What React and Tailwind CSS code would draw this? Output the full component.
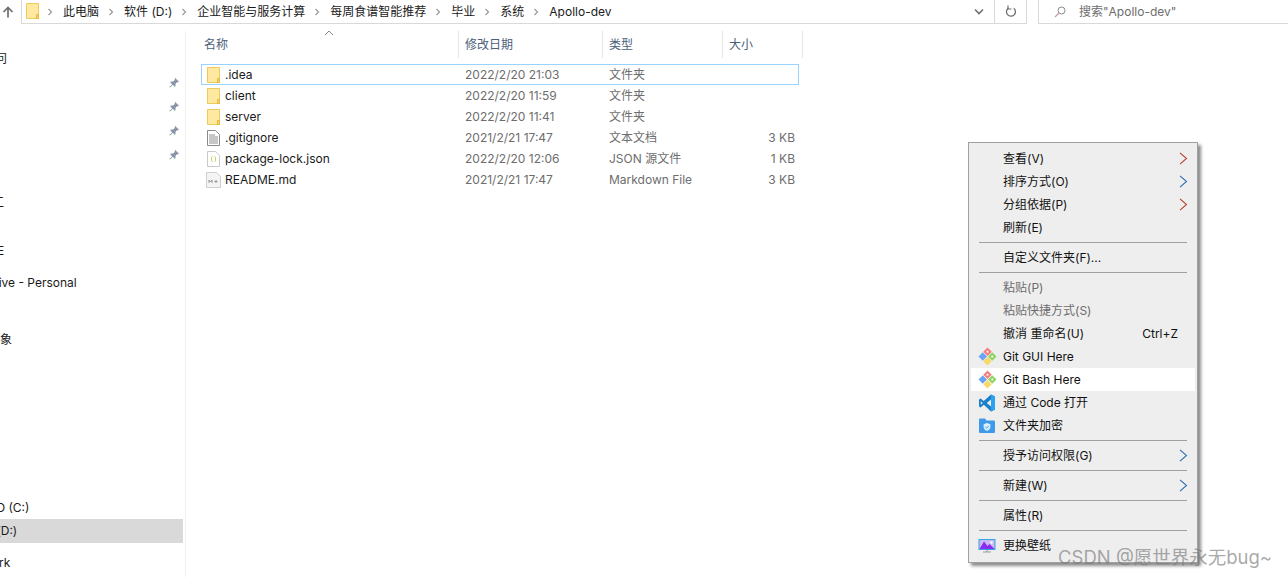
import React from "react";

const FONT = "font-['Inter','Noto_Sans_CJK_SC',sans-serif]";

function Folder() {
  return (
    <svg width="16" height="16" viewBox="0 0 16 16" className="shrink-0">
      <path d="M1.5 .5h12v15h-12z" fill="#ffe8a0" stroke="#eec95c" />
      <path d="M11.5 15.5v-4h2v4z" fill="#ffd75e" stroke="#e6b93f" strokeWidth="1" />
    </svg>
  );
}
function TextFile() {
  return (
    <svg width="16" height="16" viewBox="0 0 16 16" className="shrink-0">
      <path d="M1.5 .5h8l4 4v11h-12z" fill="#fff" stroke="#8a8a8a" />
      <path d="M3 5h6M3 7h9M3 9h9M3 11h9M3 13h9" stroke="#8e8e8e" />
    </svg>
  );
}
function JsonFile() {
  return (
    <svg width="16" height="16" viewBox="0 0 16 16" className="shrink-0">
      <path d="M1.5 .5h8l4 4v11h-12z" fill="#fff" stroke="#c9c9c9" />
      <path d="M6.5 5.5c-1 0-1 .5-1 2.5s0 2.5 1 2.5M8.5 5.5c1 0 1 .5 1 2.5s0 2.5-1 2.5" fill="none" stroke="#c7cc63" />
    </svg>
  );
}
function MdFile() {
  return (
    <svg width="16" height="16" viewBox="0 0 16 16" className="shrink-0">
      <path d="M.5 .5h10l4 4v11H.5z" fill="#f4f4f4" stroke="#cfcfcf" />
      <path d="M3 11V8l1.500 2L6 8v3M10 8v3M8.500 9.500h3" fill="none" stroke="#9a9a9a" />
    </svg>
  );
}
function GitIcon() {
  return (
    <svg width="19" height="19" viewBox="0 0 18 18">
      <path d="M9 .5l4 4L9 8.500l-4-4z" fill="#f77d7d" />
      <path d="M4.500 5L8.500 9l-4 4L.5 9z" fill="#6aa5f5" />
      <path d="M13.500 5l4 4-4 4-4-4z" fill="#8fd35f" />
      <path d="M9 9.500l4 4-4 4-4-4z" fill="#f7d96a" />
      <circle cx="9" cy="4.500" r="1" fill="#fff" />
      <circle cx="13.500" cy="9" r="1" fill="#fff" />
    </svg>
  );
}
function CodeIcon() {
  return (
    <svg width="18" height="18" viewBox="0 0 18 18">
      <path d="M13 .6l4 2v12.800l-4 2-7.200-6.600L2.600 13.400 1 12.400V5.600l1.600-1L5.800 7z" fill="#1c7fc9" />
      <path d="M13 5.400L8.800 9l4.200 3.600z" fill="#eeeeee" />
      <path d="M2.800 7.200L4.700 9l-1.900 1.800z" fill="#eeeeee" />
      <path d="M13 .6l4 2v12.800l-4 2v-4.800V5.400z" fill="#2aa3ef" />
    </svg>
  );
}
function ShieldFolder() {
  return (
    <svg width="18" height="18" viewBox="0 0 18 18">
      <path d="M1 2.500a1 1 0 0 1 1-1h5l1.500 2H16a1 1 0 0 1 1 1V15a1 1 0 0 1-1 1H2a1 1 0 0 1-1-1z" fill="#3f9bea" />
      <path d="M9 6l3.400 1.200v2.800c0 2-1.600 3.200-3.400 4-1.800-.8-3.400-2-3.400-4V7.200z" fill="#dbeeff" />
      <path d="M7.400 10l1.200 1.200 2-2.200" fill="none" stroke="#3f9bea" />
    </svg>
  );
}
function Wallpaper() {
  return (
    <svg width="18" height="16" viewBox="0 0 18 16">
      <rect x=".5" y="1" width="17" height="11" fill="#35a3e0" />
      <rect x="1.500" y="2" width="15" height="9" fill="#c9b8f5" />
      <path d="M1.500 11L6 3.500l3.500 4.500 2-2 5 5z" fill="#8a2bf0" />
      <circle cx="13.500" cy="4.500" r="1.200" fill="#fff" />
      <path d="M5 14h8M9 12v2" stroke="#9b9b9b" strokeWidth="1.2" />
    </svg>
  );
}
function Pin() {
  return (
    <svg width="12" height="12" viewBox="0 0 12 12">
      <path d="M7.200 1L11 4.800l-1 .6-.8-.3L7.400 7l.2 2-.8.8-2-2L2 10.600l-.6-.6 2.800-2.800-2-2 .8-.8 2 .2L6.900 3l-.3-.9z" fill="#8795a5" />
    </svg>
  );
}
function Chevron() {
  return (
    <svg width="8" height="8" viewBox="0 0 8 8" className="shrink-0">
      <path d="M2.500 1l3 3-3 3" fill="none" stroke="#9a9a9a" strokeWidth="1.2" />
    </svg>
  );
}
function SubArrow({ color }) {
  return (
    <svg width="9" height="13" viewBox="0 0 9 13">
      <path d="M1 .8l6.500 5.700L1 12.200" fill="none" stroke={color} strokeWidth="1.1" />
    </svg>
  );
}

const crumbs = ["此电脑", "软件 (D:)", "企业智能与服务计算", "每周食谱智能推荐", "毕业", "系统", "Apollo-dev"];

const side = [
  { t: "快速访问", row: "mt-[16px]", txt: "-ml-[41px]" },
  { pin: true },
  { pin: true },
  { pin: true },
  { pin: true },
  { t: "工", row: "mt-[23px] pt-[2px]", txt: "-ml-[8px]" },
  { t: "E", row: "mt-[24px] pt-[2px]", txt: "-ml-[3px]" },
  { t: "OneDrive - Personal", row: "mt-[8px] pt-[2px]", txt: "-ml-[38px]" },
  { t: "象", row: "mt-[33px] pt-[2px]", txt: "" },
  { t: "SSD (C:)", row: "mt-[144px] pt-[2px]", txt: "-ml-[19px]" },
  { t: "软件 (D:)", row: "bg-[#d9d9d9]", txt: "-ml-[31px]" },
  { t: "Network", row: "mt-[8px]", txt: "-ml-[38px]" },
];

const files = [
  { n: ".idea", d: "2022/2/20 21:03", k: "文件夹", s: "", I: Folder, sel: true },
  { n: "client", d: "2022/2/20 11:59", k: "文件夹", s: "", I: Folder },
  { n: "server", d: "2022/2/20 11:41", k: "文件夹", s: "", I: Folder },
  { n: ".gitignore", d: "2021/2/21 17:47", k: "文本文档", s: "3 KB", I: TextFile },
  { n: "package-lock.json", d: "2022/2/20 12:06", k: "JSON 源文件", s: "1 KB", I: JsonFile },
  { n: "README.md", d: "2021/2/21 17:47", k: "Markdown File", s: "3 KB", I: MdFile },
];

function MenuItem({ label, arrow, shortcut, icon, disabled, hover }) {
  return (
    <div className={`h-[23px] flex items-center mx-[2px] ${hover ? "bg-white" : ""}`}>
      <div className="w-[32px] pl-[7px] flex items-center justify-start shrink-0">{icon}</div>
      <span className={`whitespace-nowrap ${disabled ? "text-[#6d6d6d]" : "text-[#111]"}`}>{label}</span>
      <span className="flex-1" />
      {shortcut && <span className="mr-[17px] text-[#111]">{shortcut}</span>}
      {arrow && <span className="mr-[7px] flex"><SubArrow color={arrow} /></span>}
    </div>
  );
}
function Sep() {
  return (
    <div className="h-[7px] flex items-center pl-[10px] pr-[10px]">
      <div className="h-px w-full bg-[#a0a0a0]" />
    </div>
  );
}

export default function App() {
  return (
    <div className={`relative w-[1288px] h-[577px] bg-white overflow-hidden text-[12px] leading-none ${FONT}`}>
      {/* Address bar */}
      <div className="h-[24px] flex items-stretch">
        <div className="w-[21px] flex items-center justify-start pl-[2px] pb-[1px]">
          <svg width="12" height="12" viewBox="0 0 12 12">
            <path d="M6 11.500V2M1.500 6L6 1.500 10.500 6" fill="none" stroke="#6e6e6e" strokeWidth="1.7" />
          </svg>
        </div>
        <div className="w-[1006px] flex items-center border-l border-b border-r border-[#d9d9d9]">
          <div className="ml-[3px] mr-[5px] mb-[1px]"><Folder /></div>
          {crumbs.map((c) => (
            <div key={c} className="flex items-center">
              <Chevron />
              <span className="ml-[9px] mr-[8px] text-[#1a1a1a] whitespace-nowrap">{c}</span>
            </div>
          ))}
          <span className="flex-1" />
          <div className="w-[31px] h-full flex items-center justify-center border-r border-[#d9d9d9]">
            <svg width="10" height="8" viewBox="0 0 10 8">
              <path d="M1 1.500l4 4 4-4" fill="none" stroke="#707070" strokeWidth="1.6" />
            </svg>
          </div>
          <div className="w-[31px] h-full flex items-center justify-center">
            <svg width="12" height="13" viewBox="0 0 12 13">
              <path d="M8.800 3.200A4.500 4.500 0 1 1 3.400 3" fill="none" stroke="#707070" strokeWidth="1.3" />
              <path d="M3 .5V4h3.500" fill="none" stroke="#707070" strokeWidth="1.2" />
            </svg>
          </div>
        </div>
        <div className="ml-[11px] flex-1 flex items-center border-l border-b border-[#d9d9d9]">
          <svg className="ml-[15px] mr-[13px]" width="12" height="12" viewBox="0 0 12 12">
            <circle cx="7.500" cy="4.500" r="3.500" fill="none" stroke="#8a8a8a" />
            <path d="M5 7L1 11" stroke="#c9a0a0" strokeWidth="1.2" />
          </svg>
          <span className="text-[#6d6d6d]">搜索"Apollo-dev"</span>
        </div>
      </div>

      <div className="flex h-[553px]">
        {/* Sidebar */}
        <div className="w-[186px] shrink-0 border-r border-[#f0f0f0] mt-[7px] overflow-hidden">
          {side.map((r, i) => (
            <div key={i} className={`h-[24px] w-[183px] overflow-hidden flex items-center ${r.row ?? ""}`}>
              {r.pin ? (
                <div className="ml-auto mr-[3px] flex"><Pin /></div>
              ) : (
                <span className={`whitespace-nowrap text-[#1a1a1a] ${r.txt}`}>{r.t}</span>
              )}
            </div>
          ))}
        </div>

        {/* File list */}
        <div className="flex-1 min-w-0">
          <div className="relative h-[27px] mt-[7px] flex items-center ml-[1px] w-[616px] text-[#4c607a]">
            <svg className="absolute left-[137px] -top-[1px]" width="10" height="6" viewBox="0 0 10 6">
              <path d="M1 5l4-4 4 4" fill="none" stroke="#8a8a8a" />
            </svg>
            <div className="w-[272px] h-full flex items-center pl-[17px] border-r border-[#e5e5e5]">名称</div>
            <div className="w-[144px] h-full flex items-center pl-[6px] border-r border-[#e5e5e5]">修改日期</div>
            <div className="w-[120px] h-full flex items-center pl-[6px] border-r border-[#e5e5e5]">类型</div>
            <div className="w-[80px] h-full flex items-center pl-[6px] border-r border-[#e5e5e5]">大小</div>
          </div>
          <div className="mt-[6px] ml-[15px] w-[598px]">
            {files.map((f) => (
              <div key={f.n} className={`h-[21px] flex items-center border ${f.sel ? "border-[#99d1ff]" : "border-transparent"}`}>
                <div className="ml-[4px] mr-[3px] flex"><f.I /></div>
                <span className="w-[240px] text-[#1a1a1a] whitespace-nowrap">{f.n}</span>
                <span className="w-[144px] text-[#6d6d6d] whitespace-nowrap">{f.d}</span>
                <span className="w-[120px] text-[#6d6d6d] whitespace-nowrap">{f.k}</span>
                <span className="w-[66px] text-right text-[#6d6d6d] whitespace-nowrap">{f.s}</span>
              </div>
            ))}
          </div>
        </div>
      </div>

      {/* Context menu */}
      <div className="absolute left-[968px] top-[142px] w-[230px] h-[421px] bg-[#eeeeee] border border-[#a0a0a0] shadow-[3px_3px_3px_rgba(0,0,0,0.45)] pt-[4px]">
        <MenuItem label="查看(V)" arrow="#b5462f" />
        <MenuItem label="排序方式(O)" arrow="#2f6fb5" />
        <MenuItem label="分组依据(P)" arrow="#b5462f" />
        <MenuItem label="刷新(E)" />
        <Sep />
        <MenuItem label="自定义文件夹(F)..." />
        <Sep />
        <MenuItem label="粘贴(P)" disabled />
        <MenuItem label="粘贴快捷方式(S)" disabled />
        <MenuItem label="撤消 重命名(U)" shortcut="Ctrl+Z" />
        <MenuItem label="Git GUI Here" icon={<GitIcon />} />
        <MenuItem label="Git Bash Here" icon={<GitIcon />} hover />
        <MenuItem label="通过 Code 打开" icon={<CodeIcon />} />
        <MenuItem label="文件夹加密" icon={<ShieldFolder />} />
        <Sep />
        <MenuItem label="授予访问权限(G)" arrow="#2f6fb5" />
        <Sep />
        <MenuItem label="新建(W)" arrow="#2f6fb5" />
        <Sep />
        <MenuItem label="属性(R)" />
        <Sep />
        <MenuItem label="更换壁纸" icon={<Wallpaper />} />
      </div>

      {/* Watermark */}
      <div className="absolute left-[1058px] top-[547px] text-[18.500px] leading-[20px] text-[rgba(120,120,120,0.65)] whitespace-nowrap">
        CSDN @愿世界永无bug~
      </div>
    </div>
  );
}
